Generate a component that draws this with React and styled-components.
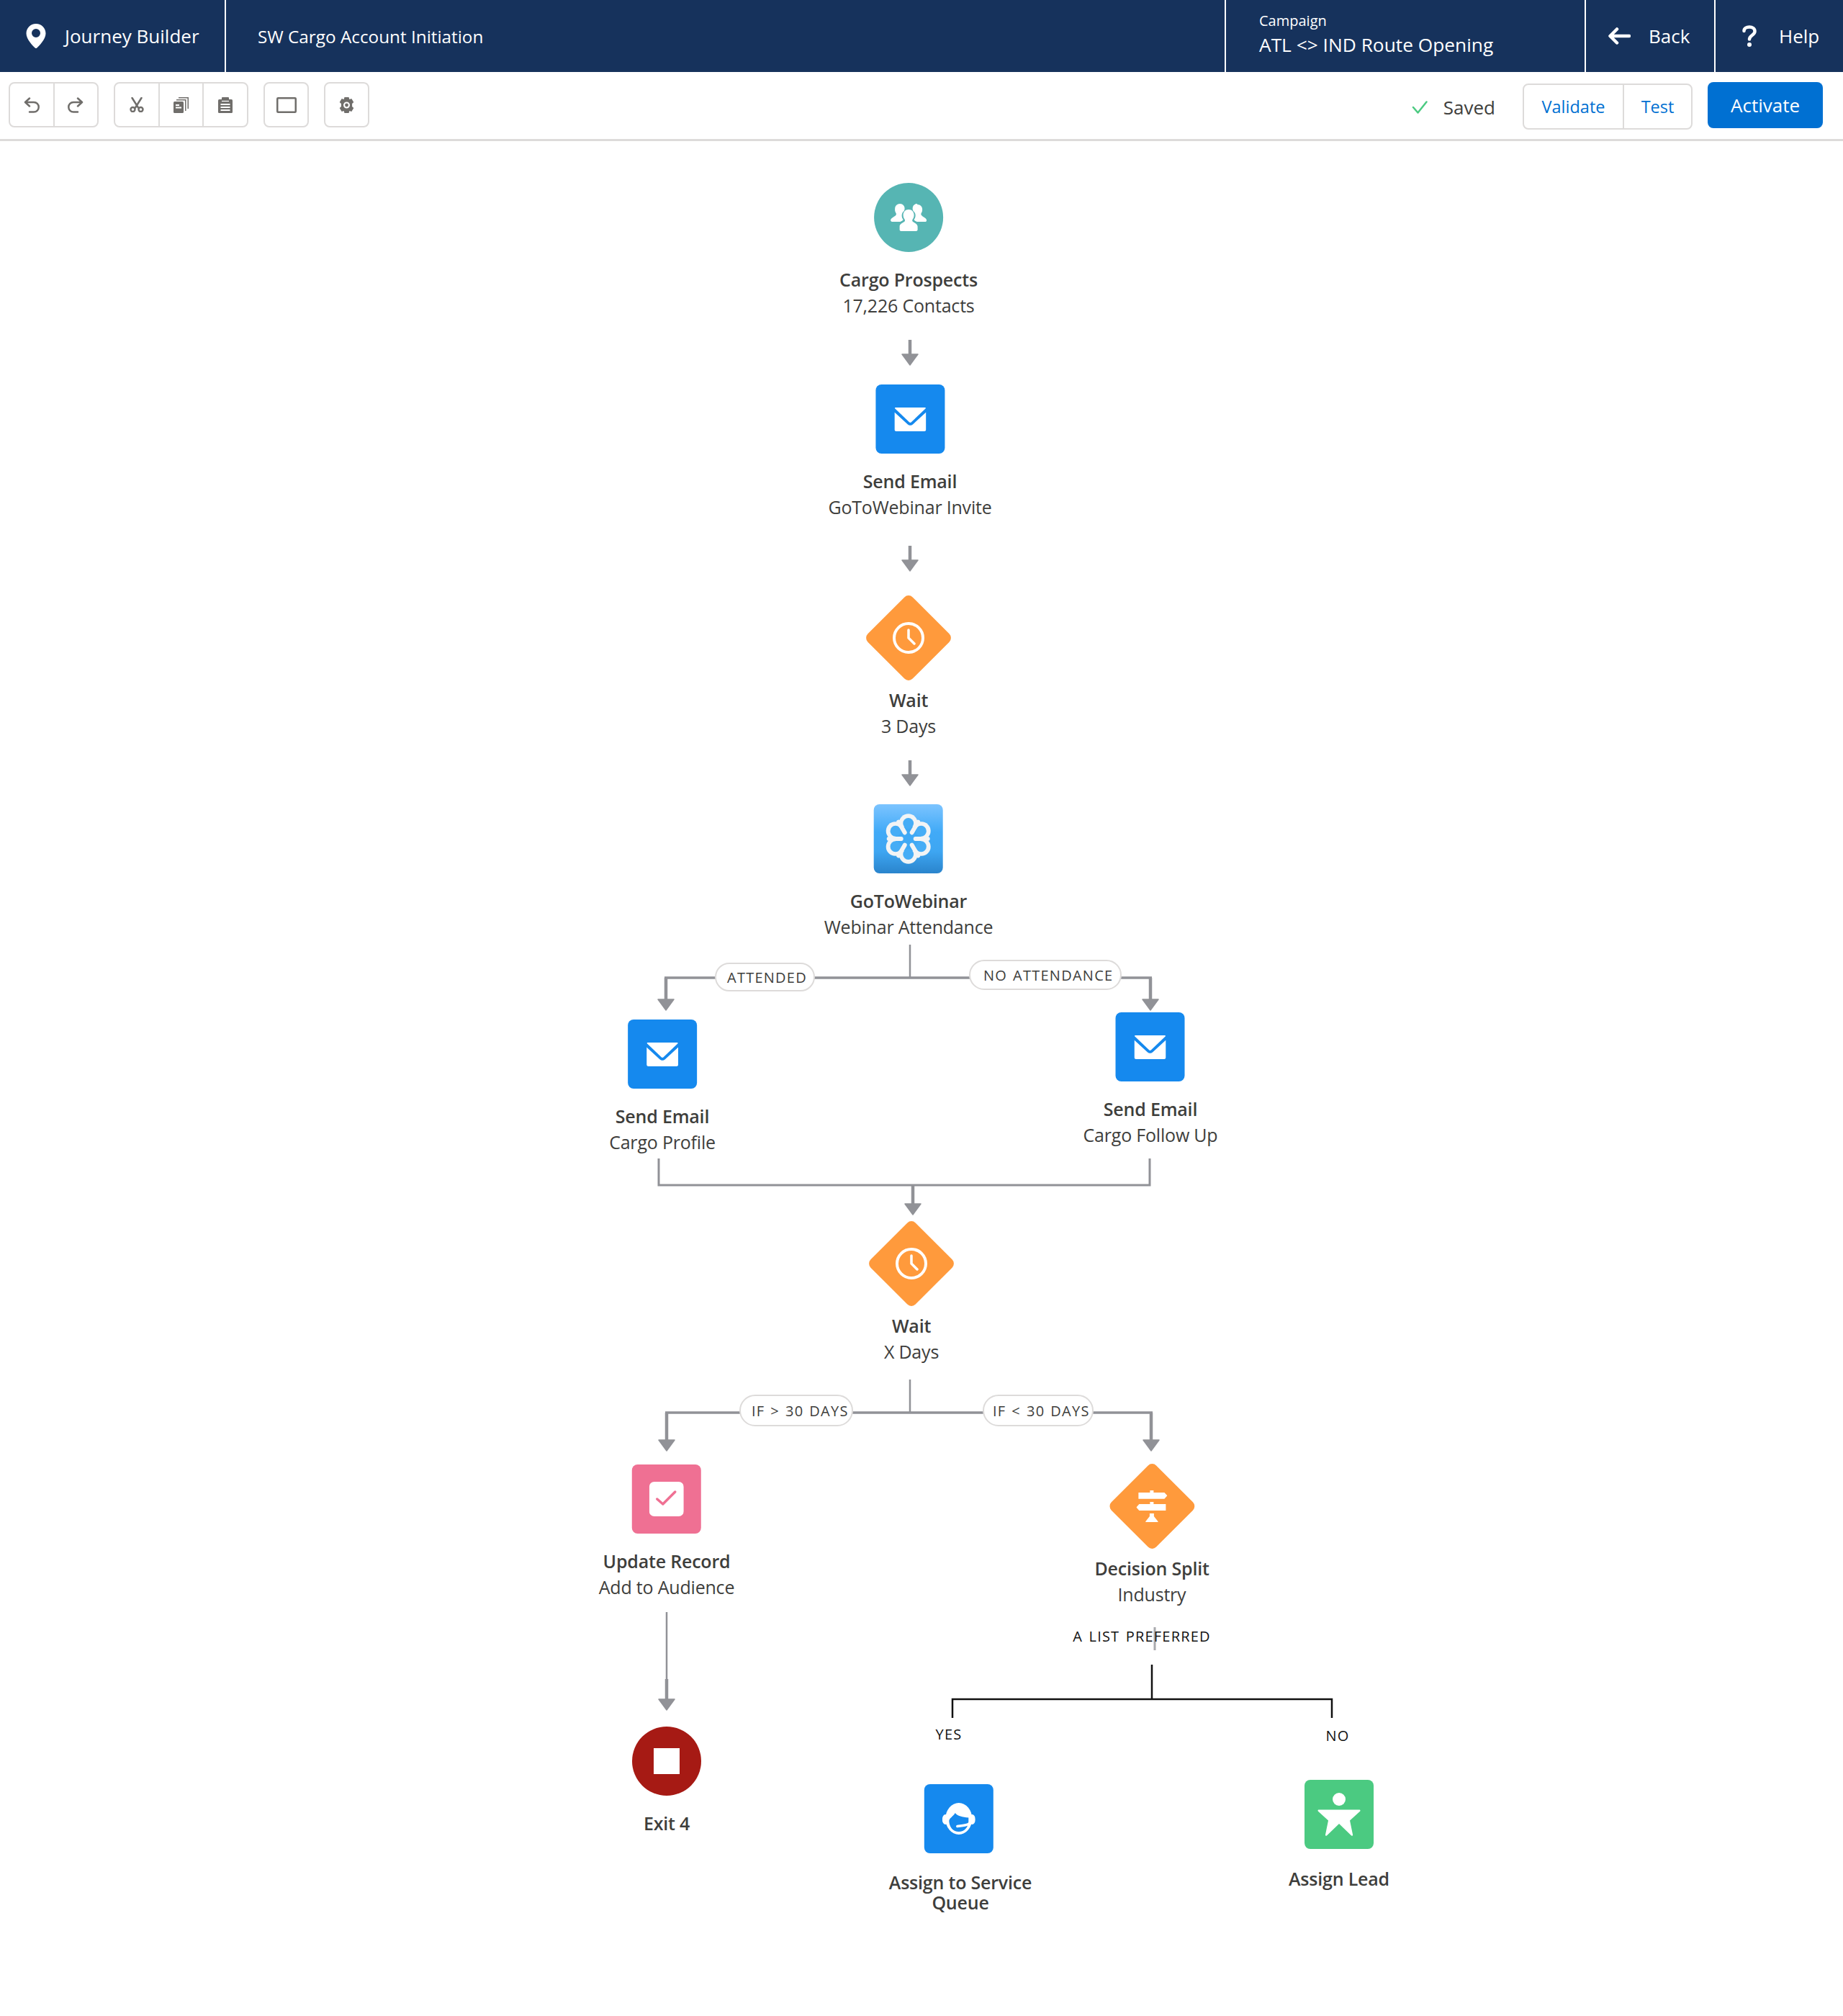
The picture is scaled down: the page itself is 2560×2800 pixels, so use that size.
import React from 'react';
import styled, { createGlobalStyle } from 'styled-components';

const TOP = 196; // canvas starts under the toolbar, node data is in page coordinates

const GlobalStyle = createGlobalStyle`
  html, body {
    margin: 0;
    padding: 0;
    background: #fff;
    font-family: "Open Sans", "Liberation Sans", sans-serif;
  }
`;

const Page = styled.div`
  width: 2560px;
  height: 2800px;
  display: flex;
  flex-direction: column;
  overflow: hidden;
`;

const Header = styled.header`
  height: 100px;
  background: #16325c;
  color: #fff;
  display: flex;
  align-items: stretch;
  flex: none;
`;

const HeaderCell = styled.div`
  display: flex;
  align-items: center;
  width: ${(p) => p.$width}px;
  padding-left: ${(p) => p.$pad || 0}px;
  box-sizing: border-box;
  border-right: ${(p) => (p.$noBorder ? 'none' : '2px solid #fff')};
  gap: ${(p) => p.$gap || 0}px;
  font-size: 26px;
  flex: none;
`;

const JourneyName = styled.div`
  flex: 1;
  display: flex;
  align-items: center;
  padding-left: 44px;
  border-right: 2px solid #fff;
  font-size: 24.3px;
`;

const CampaignCell = styled(HeaderCell)`
  flex-direction: column;
  align-items: flex-start;
  justify-content: flex-start;
  padding-top: 15px;
`;

const CampaignLabel = styled.div`
  font-size: 20px;
  line-height: 28px;
`;

const CampaignName = styled.div`
  font-size: 26.3px;
  line-height: 38px;
`;

const Toolbar = styled.div`
  height: 96px;
  box-sizing: border-box;
  border-bottom: 3px solid #dddbda;
  display: flex;
  align-items: flex-start;
  padding: 14px 28px 0 12px;
  flex: none;
`;

const ToolGroup = styled.div`
  display: flex;
  width: ${(p) => p.$width}px;
  height: 63px;
  box-sizing: border-box;
  border: 2px solid #dddbda;
  border-radius: 8px;
  margin-right: 21px;
  background: #fff;
`;

const ToolButton = styled.div`
  flex: 1;
  display: flex;
  align-items: center;
  justify-content: center;
  color: #706e6b;
  & + & {
    border-left: 2px solid #dddbda;
  }
`;

const ToolbarRight = styled.div`
  margin-left: auto;
  display: flex;
  align-items: flex-start;
`;

const Saved = styled.div`
  display: flex;
  align-items: center;
  height: 70px;
  gap: 22px;
  margin-right: 38px;
  font-size: 26px;
  color: #3e3e3c;
`;

const ActionGroup = styled.div`
  display: flex;
  width: 236px;
  height: 64px;
  margin-top: 2px;
  box-sizing: border-box;
  border: 2px solid #dddbda;
  border-radius: 8px;
  margin-right: 21px;
`;

const ActionButton = styled.div`
  width: ${(p) => p.$width}px;
  box-sizing: border-box;
  display: flex;
  align-items: center;
  justify-content: center;
  font-size: 23.5px;
  color: #0070d2;
  & + & {
    border-left: 2px solid #dddbda;
  }
`;

const Activate = styled.div`
  width: 160px;
  height: 64px;
  border-radius: 8px;
  background: #0070d2;
  color: #fff;
  font-size: 26px;
  display: flex;
  align-items: center;
  justify-content: center;
`;

const Canvas = styled.main`
  position: relative;
  flex: 1;
`;

const Wires = styled.svg`
  position: absolute;
  left: 0;
  top: 0;
  width: 2560px;
  height: ${2800 - TOP}px;
`;

const Node = styled.div`
  position: absolute;
  left: ${(p) => p.$x}px;
  top: ${(p) => p.$y - TOP}px;
  transform: translateX(-50%);
  display: flex;
  flex-direction: column;
  align-items: center;
  white-space: nowrap;
`;

const IconBox = styled.div`
  width: 96px;
  height: 96px;
  display: flex;
  align-items: center;
  justify-content: center;
  position: relative;
  margin-left: ${(p) => p.$shift || 0}px;
  border-radius: ${(p) => (p.$round ? '50%' : '8px')};
  background: ${(p) => p.$bg || 'transparent'};
  & > svg {
    position: relative;
  }
`;

const DiamondShape = styled.div`
  position: absolute;
  left: 4px;
  top: 4px;
  width: 88px;
  height: 88px;
  border-radius: 8px;
  background: #ff9a3c;
  transform: rotate(45deg);
`;

const Title = styled.div`
  margin-top: ${(p) => p.$gap ?? 20}px;
  font-size: 25px;
  line-height: ${(p) => p.$lh || 36}px;
  font-weight: 600;
  color: #3e3e3c;
  text-align: center;
  letter-spacing: -0.2px;
`;

const Sub = styled.div`
  font-size: 25px;
  line-height: 36px;
  color: #3e3e3c;
  letter-spacing: -0.2px;
`;

const Pill = styled.div`
  position: absolute;
  left: ${(p) => p.$x}px;
  top: ${(p) => p.$y - TOP}px;
  width: ${(p) => p.$w}px;
  height: ${(p) => p.$h}px;
  box-sizing: border-box;
  padding-left: ${(p) => p.$pad - 2}px;
  border: 2px solid #dddbda;
  border-radius: 22px;
  background: #fff;
  display: flex;
  align-items: center;
  font-size: 20px;
  letter-spacing: 1.25px;
  word-spacing: 1.5px;
  color: #3e3e3c;
  white-space: nowrap;
`;

const PlainLabel = styled.div`
  position: absolute;
  left: ${(p) => p.$x}px;
  top: ${(p) => p.$y - TOP - 14}px;
  line-height: 28px;
  transform: translateX(-50%);
  font-size: 20px;
  letter-spacing: 1.2px;
  word-spacing: 2px;
  color: #111;
  white-space: nowrap;
`;

const Grey = '#919297';

const Arrow = ({ x, y1, y2, thin }) => (
  <g>
    {thin != null && <line x1={x} y1={y1} x2={x} y2={thin} stroke={Grey} strokeWidth="2.5" />}
    <line x1={x} y1={thin ?? y1} x2={x} y2={y2 - 12} stroke={Grey} strokeWidth="4.5" />
    <path d={`M${x - 11} ${y2 - 15}h22l-11 15z`} fill={Grey} stroke={Grey} strokeWidth="1.5" strokeLinejoin="round" />
  </g>
);

const PinIcon = () => (
  <svg width="28" height="34" viewBox="0 0 28 34">
    <path fillRule="evenodd" fill="#fff" d="M14 0C6.300 0 0.500 6 0.500 13.400c0 8.200 9.400 17.400 12.200 20a1.900 1.900 0 0 0 2.600 0c2.800-2.600 12.200-11.800 12.200-20C27.500 6 21.700 0 14 0zm0 19a6 6 0 1 1 0-12 6 6 0 0 1 0 12z" />
  </svg>
);

const BackArrow = () => (
  <svg width="31" height="24" viewBox="0 0 31 24" fill="none" stroke="#fff" strokeWidth="4.500" strokeLinecap="round" strokeLinejoin="round">
    <path d="M12 2.500L2.500 12l9.500 9.500M3.500 12H29" />
  </svg>
);

const HelpMark = () => (
  <svg width="20" height="30" viewBox="0 0 20 30">
    <path d="M2.500 8C2.500 4.500 6 2.500 10 2.500s7.500 2.300 7.500 6c0 5.500-7.500 5.500-7.500 11" fill="none" stroke="#fff" strokeWidth="4.500" strokeLinecap="round" />
    <circle cx="10" cy="27" r="3" fill="#fff" />
  </svg>
);

const UndoIcon = ({ flip }) => (
  <svg width="22" height="22" viewBox="0 0 22 22" fill="none" stroke="currentColor" strokeWidth="2.500" strokeLinecap="round" strokeLinejoin="round" style={flip ? { transform: 'scaleX(-1)' } : undefined}>
    <path d="M8 1.500L2 7l6 5.500M3 7h11a6.500 6.500 0 0 1 0 13.500H8" />
  </svg>
);

const ScissorsIcon = () => (
  <svg width="20" height="21" viewBox="0 0 20 21" fill="none" stroke="currentColor" strokeLinecap="round">
    <path d="M3.500 1l8.500 13.500M16.500 1L8 14.500" strokeWidth="2.500" />
    <circle cx="4.500" cy="17" r="3" strokeWidth="2.400" />
    <circle cx="15.500" cy="17" r="3" strokeWidth="2.400" />
  </svg>
);

const CopyIcon = () => (
  <svg width="21" height="22" viewBox="0 0 21 22">
    <path d="M7 0h14v16h-1.500V1.500H7z" fill="currentColor" />
    <path d="M4 3h13.500v16H16V4.500H4z" fill="currentColor" />
    <rect x="0" y="6" width="14" height="16" rx="1.500" fill="currentColor" />
    <path d="M3 11h5M3 14.500h8" stroke="#fff" strokeWidth="1.800" />
  </svg>
);

const ClipboardIcon = () => (
  <svg width="20" height="22" viewBox="0 0 20 22">
    <rect x="0" y="3" width="20" height="19" rx="1.500" fill="currentColor" />
    <rect x="5" y="0" width="10" height="5" rx="1" fill="currentColor" />
    <path d="M5 5.500h10" stroke="#fff" strokeWidth="1.200" />
    <path d="M3.500 10h13M3.500 14h13M3.500 18h13" stroke="#fff" strokeWidth="1.800" />
  </svg>
);

const FrameIcon = () => (
  <svg width="28" height="22" viewBox="0 0 28 22" fill="none" stroke="currentColor" strokeWidth="2.500">
    <rect x="1.250" y="1.250" width="25.500" height="19.500" rx="1" />
  </svg>
);

const GearIcon = () => (
  <svg width="21" height="22" viewBox="0 0 21 22">
    <path fillRule="evenodd" fill="currentColor" d="M7.500 0h6l.9 3 2.900-1 3 5-2.200 2v4l2.200 2-3 5-2.900-1-.9 3h-6l-.9-3-2.900 1-3-5 2.200-2V9L.7 7l3-5 2.900 1zM10.500 6.500a4.500 4.500 0 1 0 0 9 4.500 4.500 0 0 0 0-9z" />
    <circle cx="10.500" cy="11" r="2.400" fill="currentColor" />
  </svg>
);

const CheckMark = () => (
  <svg width="22" height="20" viewBox="0 0 22 20" fill="none" stroke="#4bca81" strokeWidth="2.500" strokeLinecap="round" strokeLinejoin="round">
    <path d="M2 10l6.500 7.500L20.500 2.500" />
  </svg>
);

const PeopleIcon = () => (
  <svg width="50" height="40" viewBox="0 0 50 40" fill="#fff">
    <path d="M13 1c4 0 6.500 3 6.500 6.500 0 1.500-.4 2.700-1 3.800-1.800 1.300-3 3.400-3 6 0 2.300.7 4.200 2 5.700-.5 1.400-2.500 2-4 3H2c-1.200 0-2-.8-2-1.900 0-3.500 6-5 7.500-7.600.6-1.300.2-2.300-.5-3.300-1-1.500-1-3-1-5C6 4 9 1 13 1z" />
    <path d="M37 1c-4 0-6.500 3-6.500 6.500 0 1.500.4 2.700 1 3.800 1.800 1.300 3 3.400 3 6 0 2.300-.7 4.200-2 5.700.5 1.400 2.500 2 4 3h11.500c1.200 0 2-.8 2-1.900 0-3.500-6-5-7.500-7.600-.6-1.300-.2-2.300.5-3.300 1-1.500 1-3 1-5 0-3.200-3-6.200-7-6.200z" />
    <path d="M25 9c4.600 0 7.500 3.500 7.500 7.800 0 2.200-.6 4-1.700 5.500-1.300 2-.7 3.300 1 4.300 2.700 1.500 5.700 3 5.700 6.200v4.200c0 1.100-1 2-2.200 2H14.700c-1.200 0-2.200-.9-2.200-2v-4.200c0-3.200 3-4.700 5.700-6.200 1.700-1 2.300-2.300 1-4.300-1.100-1.500-1.700-3.300-1.700-5.500C17.500 12.500 20.400 9 25 9z" />
  </svg>
);

const MailIcon = () => (
  <svg width="44" height="33" viewBox="0 0 44 33">
    <path fill="#fff" d="M1.500 0h41c1 0 1.300.8.600 1.500L23.200 20.500c-.7.600-1.700.6-2.400 0L.9 1.500C.2.800.5 0 1.500 0z" />
    <path fill="#fff" d="M0 6.500v24C0 32 1 33 2.500 33h39c1.500 0 2.500-1 2.500-2.500v-24L25.500 23.500c-2 1.800-5 1.800-7 0z" />
  </svg>
);

const ClockIcon = () => (
  <svg width="44" height="44" viewBox="0 0 44 44" fill="none" stroke="#fff" strokeWidth="4" strokeLinecap="round" strokeLinejoin="round">
    <circle cx="22" cy="22" r="20" />
    <path d="M22 11v11l8 8" strokeWidth="3.500" />
  </svg>
);

const rad = (a) => (a * Math.PI) / 180;

const FlowerIcon = () => {
  // six round petals cut into the ring, with the spokes left open towards the middle
  const petals = [0, 60, 120, 180, 240, 300];
  const spokes = [30, 90, 150, 210, 270, 330];
  return (
    <svg width="66" height="72" viewBox="-33 -36 66 72">
      <g fill="#f2f4f5">
        {petals.map((a) => (
          <circle key={a} cx={21 * Math.sin(rad(a))} cy={-22 * Math.cos(rad(a))} r="12.800" />
        ))}
      </g>
      <circle r="18" fill="#3fa9f5" />
      <g fill="#46adf6">
        {petals.map((a) => (
          <circle key={a} cx={20.500 * Math.sin(rad(a))} cy={-21.500 * Math.cos(rad(a))} r="7.400" />
        ))}
      </g>
      <g stroke="#f2f4f5" strokeWidth="6" strokeLinecap="round">
        {spokes.map((a) => (
          <line key={a} x1={27 * Math.sin(rad(a))} y1={-27 * Math.cos(rad(a))} x2={10 * Math.sin(rad(a))} y2={-10 * Math.cos(rad(a))} />
        ))}
      </g>
    </svg>
  );
};

const WebinarTile = styled(IconBox)`
  background: linear-gradient(180deg, #7cc4ff 0%, #41aaf7 40%, #3ea6f2 68%, #2a84cc 100%);
`;

const RecordTile = () => (
  <svg width="48" height="48" viewBox="0 0 48 48">
    <rect width="48" height="48" rx="7" fill="#fff" />
    <path d="M11 24l8 7L36 14" fill="none" stroke="#ef7093" strokeWidth="3.500" strokeLinecap="round" strokeLinejoin="round" />
  </svg>
);

const SignpostIcon = () => (
  <svg width="43" height="44" viewBox="0 0 43 44" fill="#fff">
    <path d="M3 3h16V0h5v3h15l4 4.300-4 4.400H3z" />
    <path d="M4 19h15v-3h5v3h17v9H4l-4-4.500z" />
    <path d="M18.500 32h6v4l5.500 7c.4.500.1 1-.5 1h-16c-.6 0-.9-.5-.5-1l5.500-7z" />
  </svg>
);

const StopSquare = () => (
  <svg width="36" height="36" viewBox="0 0 36 36">
    <rect width="36" height="36" fill="#fff" />
  </svg>
);

const AgentIcon = () => (
  <svg width="46" height="44" viewBox="0 0 46 44">
    <ellipse cx="23" cy="22" rx="18.500" ry="22" fill="#fff" />
    <ellipse cx="4.500" cy="23" rx="4.500" ry="7" fill="#fff" />
    <ellipse cx="41.500" cy="23" rx="4.500" ry="7" fill="#fff" />
    <path fill="#1589ee" d="M9.500 25C10 21 15 19 18 14c3 4 10 6 18.500 6.500V26C36 34 31 40 23 40S10 34 9.500 25z" />
    <path d="M42 24C39 31 31 31 21 32.500" fill="none" stroke="#fff" strokeWidth="3.500" strokeLinecap="round" />
  </svg>
);

const LeadIcon = () => (
  <svg width="60" height="60" viewBox="0 0 60 60" fill="#fff">
    <ellipse cx="30" cy="9" rx="9" ry="9" />
    <path d="M2 23.500h56c1.500 0 2 1.200 1 2.300L45 38.500l4 19.500c.4 1.600-1.400 2.400-2.400 1L30 43 13.400 59c-1 1.400-2.800.6-2.400-1l4-19.500L1 25.800c-1-1.100-.5-2.300 1-2.300z" />
  </svg>
);

const Diamond = ({ children }) => (
  <IconBox>
    <DiamondShape />
    {children}
  </IconBox>
);

const App = () => (
  <Page>
    <GlobalStyle />
    <Header>
      <HeaderCell $width={314} $pad={36} $gap={26}>
        <PinIcon />
        Journey Builder
      </HeaderCell>
      <JourneyName>SW Cargo Account Initiation</JourneyName>
      <CampaignCell $width={500} $pad={46}>
        <CampaignLabel>Campaign</CampaignLabel>
        <CampaignName>ATL &lt;&gt; IND Route Opening</CampaignName>
      </CampaignCell>
      <HeaderCell $width={180} $pad={31} $gap={25}>
        <BackArrow />
        Back
      </HeaderCell>
      <HeaderCell $width={177} $pad={37} $gap={31} $noBorder>
        <HelpMark />
        Help
      </HeaderCell>
    </Header>
    <Toolbar>
      <ToolGroup $width={125}>
        <ToolButton><UndoIcon /></ToolButton>
        <ToolButton><UndoIcon flip /></ToolButton>
      </ToolGroup>
      <ToolGroup $width={187}>
        <ToolButton><ScissorsIcon /></ToolButton>
        <ToolButton><CopyIcon /></ToolButton>
        <ToolButton><ClipboardIcon /></ToolButton>
      </ToolGroup>
      <ToolGroup $width={63}>
        <ToolButton><FrameIcon /></ToolButton>
      </ToolGroup>
      <ToolGroup $width={63}>
        <ToolButton><GearIcon /></ToolButton>
      </ToolGroup>
      <ToolbarRight>
        <Saved><CheckMark />Saved</Saved>
        <ActionGroup>
          <ActionButton $width={137}>Validate</ActionButton>
          <ActionButton $width={95}>Test</ActionButton>
        </ActionGroup>
        <Activate>Activate</Activate>
      </ToolbarRight>
    </Toolbar>
    <Canvas>
      <Wires viewBox={`0 ${TOP} 2560 ${2800 - TOP}`}>
        <Arrow x={1264} y1={472} y2={507} />
        <Arrow x={1264} y1={758} y2={793} />
        <Arrow x={1264} y1={1056} y2={1091} />

        <line x1={1264} y1={1312} x2={1264} y2={1358} stroke={Grey} strokeWidth="2.500" />
        <line x1={923} y1={1358} x2={1600} y2={1358} stroke={Grey} strokeWidth="3.500" />
        <Arrow x={925} y1={1358} y2={1403} />
        <Arrow x={1598} y1={1358} y2={1403} />

        <path d="M915 1609v37h682v-37" fill="none" stroke={Grey} strokeWidth="3" />
        <Arrow x={1268} y1={1646} y2={1687} />

        <line x1={1264} y1={1916} x2={1264} y2={1962} stroke={Grey} strokeWidth="2.500" />
        <line x1={924} y1={1962} x2={1601} y2={1962} stroke={Grey} strokeWidth="3.500" />
        <Arrow x={926} y1={1962} y2={2015} />
        <Arrow x={1599} y1={1962} y2={2015} />

        <Arrow x={926} y1={2239} thin={2332} y2={2375} />

        <line x1={1604} y1={2260} x2={1604} y2={2292} stroke="#a8a9ad" strokeWidth="3" />
        <path d="M1600 2312v48M1323 2386v-26h527v26" fill="none" stroke="#111" strokeWidth="2.500" />
      </Wires>

      <Node $x={1262} $y={254}>
        <IconBox $round $bg="#56b5b3"><PeopleIcon /></IconBox>
        <Title>Cargo Prospects</Title>
        <Sub>17,226 Contacts</Sub>
      </Node>
      <Node $x={1264} $y={534}>
        <IconBox $bg="#1589ee"><MailIcon /></IconBox>
        <Title>Send Email</Title>
        <Sub>GoToWebinar Invite</Sub>
      </Node>
      <Node $x={1262} $y={838}>
        <Diamond><ClockIcon /></Diamond>
        <Title>Wait</Title>
        <Sub>3 Days</Sub>
      </Node>
      <Node $x={1262} $y={1117}>
        <WebinarTile><FlowerIcon /></WebinarTile>
        <Title>GoToWebinar</Title>
        <Sub>Webinar Attendance</Sub>
      </Node>
      <Node $x={920} $y={1416}>
        <IconBox $bg="#1589ee"><MailIcon /></IconBox>
        <Title>Send Email</Title>
        <Sub>Cargo Profile</Sub>
      </Node>
      <Node $x={1598} $y={1406}>
        <IconBox $bg="#1589ee"><MailIcon /></IconBox>
        <Title>Send Email</Title>
        <Sub>Cargo Follow Up</Sub>
      </Node>
      <Node $x={1266} $y={1707}>
        <Diamond><ClockIcon /></Diamond>
        <Title>Wait</Title>
        <Sub>X Days</Sub>
      </Node>
      <Node $x={926} $y={2034}>
        <IconBox $bg="#ef7093"><RecordTile /></IconBox>
        <Title>Update Record</Title>
        <Sub>Add to Audience</Sub>
      </Node>
      <Node $x={1600} $y={2044}>
        <Diamond><SignpostIcon /></Diamond>
        <Title>Decision Split</Title>
        <Sub>Industry</Sub>
      </Node>
      <Node $x={926} $y={2398}>
        <IconBox $round $bg="#a61a14"><StopSquare /></IconBox>
        <Title>Exit 4</Title>
      </Node>
      <Node $x={1334} $y={2478}>
        <IconBox $bg="#1589ee" $shift={-4}><AgentIcon /></IconBox>
        <Title $gap={26} $lh={28}>Assign to Service<br />Queue</Title>
      </Node>
      <Node $x={1860} $y={2472}>
        <IconBox $bg="#4bca81"><LeadIcon /></IconBox>
        <Title $gap={23}>Assign Lead</Title>
      </Node>

      <Pill $x={993} $y={1337} $w={139} $h={40} $pad={17}>ATTENDED</Pill>
      <Pill $x={1346} $y={1333} $w={212} $h={42} $pad={20}>NO ATTENDANCE</Pill>
      <Pill $x={1027} $y={1937} $w={158} $h={44} $pad={17}>IF &gt; 30 DAYS</Pill>
      <Pill $x={1365} $y={1937} $w={154} $h={44} $pad={14}>IF &lt; 30 DAYS</Pill>

      <PlainLabel $x={1586} $y={2273}>A LIST PREFERRED</PlainLabel>
      <PlainLabel $x={1318} $y={2409}>YES</PlainLabel>
      <PlainLabel $x={1858} $y={2411}>NO</PlainLabel>
    </Canvas>
  </Page>
);

export default App;
